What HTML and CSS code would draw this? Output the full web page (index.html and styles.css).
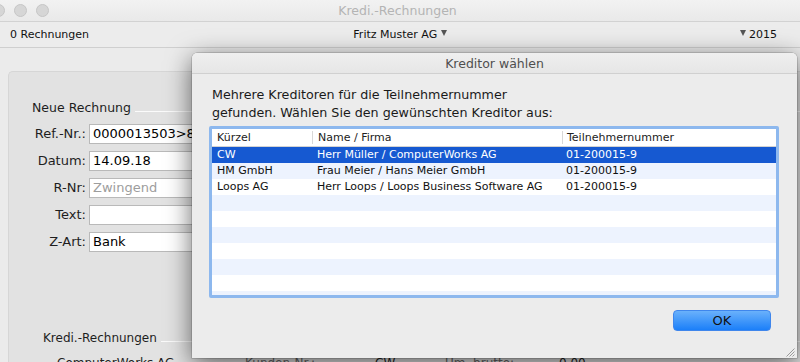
FILE: index.html
```html
<!DOCTYPE html>
<html lang="de">
<head>
<meta charset="utf-8">
<title>Kredi.-Rechnungen</title>
<link rel="stylesheet" href="styles.css">
</head>
<body>
<div class="window">
  <div class="titlebar">
    <div class="lights"><span></span><span></span><span></span></div>
    <div class="title">Kredi.-Rechnungen</div>
  </div>
  <div class="toolbar">
    <span class="count">0 Rechnungen</span>
    <span class="company">Fritz Muster AG <i class="tri"></i></span>
    <span class="year"><i class="tri"></i> 2015</span>
  </div>
  <div class="content">
    <div class="panel">
      <div class="group-title"><span>Neue Rechnung</span><i class="rule"></i></div>
      <div class="form">
        <label>Ref.-Nr.:</label><div class="input">0000013503&gt;8</div>
        <label>Datum:</label><div class="input">14.09.18</div>
        <label>R-Nr:</label><div class="input placeholder">Zwingend</div>
        <label>Text:</label><div class="input"></div>
        <label>Z-Art:</label><div class="input">Bank</div>
      </div>
      <div class="group-title second"><span>Kredi.-Rechnungen</span><i class="rule"></i></div>
      <div class="summary">
        <span class="s-name">ComputerWorks AG</span>
        <span class="s-label s-kn">Kunden-Nr.:</span>
        <span class="s-val s-cw">CW</span>
        <span class="s-label s-um">Um. brutto:</span>
        <span class="s-val">0.00</span>
      </div>
    </div>
  </div>
</div>

<div class="dialog">
  <div class="d-title">Kreditor wählen</div>
  <div class="d-body">
    <p class="d-msg">Mehrere Kreditoren für die Teilnehmernummer<br>gefunden. Wählen Sie den gewünschten Kreditor aus:</p>
    <div class="table">
      <div class="t-head">
        <span class="c1">Kürzel</span><span class="c2">Name / Firma</span><span class="c3">Teilnehmernummer</span>
      </div>
      <div class="t-rows">
        <div class="t-row selected"><span class="c1">CW</span><span class="c2">Herr Müller / ComputerWorks AG</span><span class="c3">01-200015-9</span></div>
        <div class="t-row"><span class="c1">HM GmbH</span><span class="c2">Frau Meier / Hans Meier GmbH</span><span class="c3">01-200015-9</span></div>
        <div class="t-row"><span class="c1">Loops AG</span><span class="c2">Herr Loops / Loops Business Software AG</span><span class="c3">01-200015-9</span></div>
        <div class="t-row"></div>
        <div class="t-row"></div>
        <div class="t-row"></div>
        <div class="t-row"></div>
        <div class="t-row"></div>
        <div class="t-row"></div>
        <div class="t-row"></div>
      </div>
    </div>
    <div class="d-actions"><button class="ok">OK</button></div>
  </div>
  <svg class="grip" width="10" height="10" viewBox="0 0 10 10"><path d="M9.5 1.5 L1.5 9.5 M9.5 4.5 L4.5 9.5 M9.5 7.5 L7.5 9.5" stroke="#9a9a9a" stroke-width="1" fill="none"/></svg>
</div>
</body>
</html>
```

FILE: styles.css
```css
html, body {
  margin: 0;
  padding: 0;
}
body {
  width: 800px;
  height: 362px;
  overflow: hidden;
  position: relative;
  background: #ebebeb;
  font-family: "DejaVu Sans", "Liberation Sans", sans-serif;
  color: #1a1a1a;
}
.window {
  height: 362px;
  display: flex;
  flex-direction: column;
  overflow: hidden;
}
.titlebar {
  flex: 0 0 22px;
  height: 22px;
  box-sizing: border-box;
  border-bottom: 1px solid #d2d2d2;
  background: linear-gradient(#f2f2f2, #e9e9e9);
  display: flex;
  align-items: center;
}
.lights {
  display: flex;
  gap: 9px;
  margin-left: -8px;
}
.lights span {
  width: 11px;
  height: 11px;
  border-radius: 50%;
  background: #d6d6d6;
  border: 0.5px solid #c6c6c6;
}
.title {
  flex: 1;
  text-align: center;
  font-size: 12.5px;
  color: #b4b4b4;
  margin-left: -40px;
  padding-right: 14px;
}
.toolbar {
  flex: 0 0 26px;
  height: 26px;
  box-sizing: border-box;
  border-bottom: 1px solid #cfcfcf;
  background: #ececec;
  display: grid;
  grid-template-columns: 1fr auto 1fr;
  align-items: center;
  padding: 0 10px;
  font-size: 11px;
  color: #111;
}
.company { text-align: center; }
.year { justify-self: end; margin-right: 13px; }
.tri {
  display: inline-block;
  width: 0;
  height: 0;
  border-left: 3.5px solid transparent;
  border-right: 3.5px solid transparent;
  border-top: 6px solid #555;
  vertical-align: 2px;
}
.content {
  flex: 1 1 auto;
  min-height: 0;
  padding: 23px 0 0 8px;
  background: #ebebeb;
}
.panel {
  height: 400px;
  box-sizing: border-box;
  background: #e2e2e2;
  border: 1px solid #d6d6d6;
  border-right: none;
  border-bottom: none;
  border-radius: 5px 0 0 0;
  padding: 28px 0 0 20px;
  font-size: 12.5px;
}
.group-title {
  display: flex;
  align-items: flex-end;
  height: 16px;
  line-height: 16px;
  color: #1e1e1e;
  padding-left: 3px;
}
.group-title .rule {
  flex: 1;
  height: 1px;
  background: #fbfbfb;
  margin: 0 0 4px 4px;
}
.group-title.second {
  margin-top: 78px;
  padding-left: 14px;
  font-size: 12px;
}
.form {
  margin-top: 8px;
  display: grid;
  grid-template-columns: 57px 200px;
  grid-auto-rows: 20px;
  row-gap: 7px;
  column-gap: 3px;
}
.form label {
  text-align: right;
  line-height: 20px;
  color: #1e1e1e;
  font-size: 13px;
}
.input {
  background: #fff;
  border: 1px solid #b9b9b9;
  box-sizing: border-box;
  line-height: 18px;
  padding-left: 3px;
  font-size: 13px;
  color: #000;
  white-space: nowrap;
  overflow: hidden;
}
.input.placeholder { color: #9d9d9d; }
.summary {
  margin-top: 10px;
  display: flex;
  font-size: 12px;
  line-height: 15px;
  padding-left: 28px;
  white-space: nowrap;
}
.s-name { width: 188px; color: #222; }
.s-kn { width: 130px; }
.s-cw { width: 70px; }
.s-um { width: 114px; }
.s-label { color: #666; }
.s-val { color: #222; }

/* dialog */
.dialog {
  position: absolute;
  left: 192px;
  top: 53px;
  width: 605px;
  height: 305px;
  background: #ececec;
  border-radius: 5px 5px 0 0;
  box-shadow: 0 6px 26px rgba(0, 0, 0, 0.6), 0 0 0 0.5px rgba(0, 0, 0, 0.25);
  display: flex;
  flex-direction: column;
}
.d-title {
  height: 21px;
  box-sizing: border-box;
  border-bottom: 1px solid #d0d0d0;
  background: linear-gradient(#efefef, #e6e6e6);
  border-radius: 5px 5px 0 0;
  text-align: center;
  font-size: 12.5px;
  line-height: 21px;
  color: #4f4f4f;
}
.d-body {
  padding: 12px 18px 0 17px;
  display: flex;
  flex-direction: column;
}
.d-msg {
  margin: 0 0 0 3px;
  font-size: 12.7px;
  line-height: 18px;
  color: #1a1a1a;
}
.table {
  margin-top: 4px;
  border: 3px solid #8db8ee;
  border-radius: 2px;
  background: #fff;
  font-size: 11px;
}
.t-head {
  display: flex;
  height: 18px;
  box-sizing: border-box;
  border-bottom: 1px solid #d3d3d3;
  line-height: 17px;
  color: #222;
}
.t-head .c2, .t-head .c3 {
  border-left: 1px solid #d8d8d8;
  margin: 2px 0;
  line-height: 13px;
}
.c1 { width: 100px; padding-left: 5px; box-sizing: border-box; }
.c2 { width: 250px; padding-left: 5px; box-sizing: border-box; }
.c3 { flex: 1; padding-left: 4px; box-sizing: border-box; }
.t-rows {
  height: 148px;
  overflow: hidden;
}
.t-row {
  display: flex;
  height: 16px;
  line-height: 16px;
  color: #111;
  white-space: nowrap;
}
.t-row:nth-child(even) { background: #edf3fe; }
.t-row.selected {
  background: #1659d1;
  color: #fff;
}
.d-actions {
  display: flex;
  justify-content: flex-end;
  padding-right: 8px;
  margin-top: 12px;
}
.ok {
  width: 98px;
  height: 21px;
  border: 1px solid #3f86ec;
  border-radius: 4px;
  background: linear-gradient(#6ab1fb, #1b7ff9);
  font-family: "DejaVu Sans", "Liberation Sans", sans-serif;
  font-size: 13px;
  color: #111;
  padding: 0;
}
.grip {
  position: absolute;
  right: 2px;
  bottom: 1px;
}
```
